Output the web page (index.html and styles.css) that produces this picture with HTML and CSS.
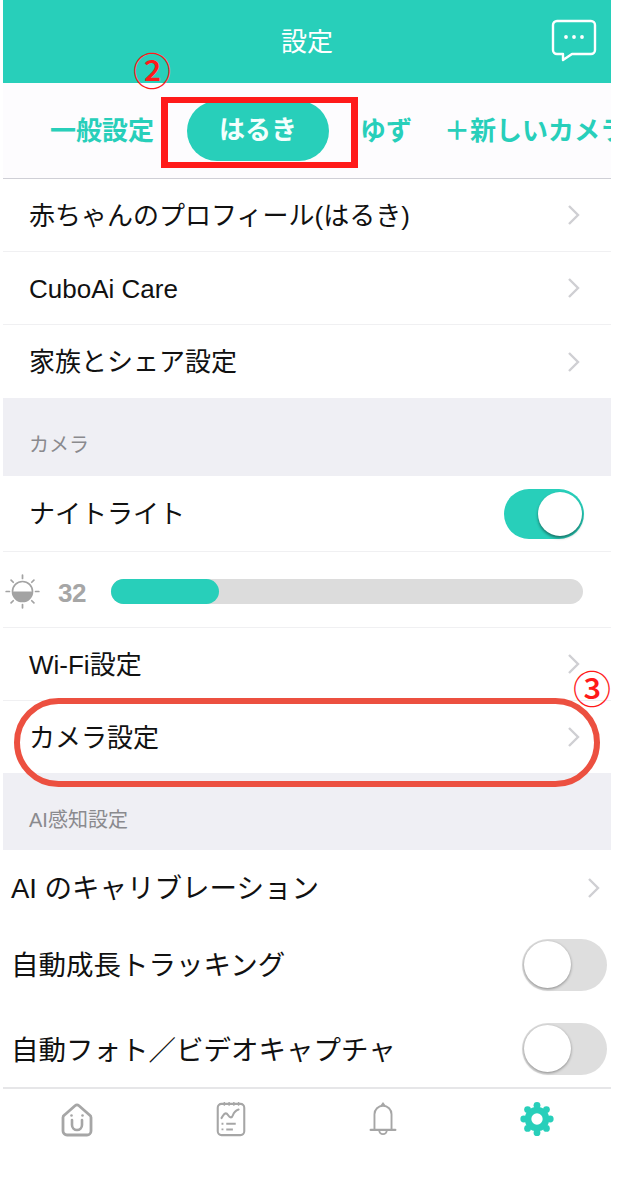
FILE: index.html
```html
<!DOCTYPE html>
<html lang="ja">
<head>
    <meta charset="UTF-8">
    <title>設定</title>
    <link rel="stylesheet" href="styles.css">
</head>
<body>
    <div class="phone">
        <div class="header">
            <span class="header-title">設定</span>
            <svg class="chat-icon" width="46" height="44" viewBox="0 0 46 44" fill="none">
                <path d="M6 2h34a4 4 0 0 1 4 4v25a4 4 0 0 1-4 4H21l-9 6v-6H6a4 4 0 0 1-4-4V6a4 4 0 0 1 4-4z" stroke="#fff" stroke-width="2.4" stroke-linejoin="round"/>
                <circle cx="15" cy="18" r="1.9" fill="#fff"/>
                <circle cx="23" cy="18" r="1.9" fill="#fff"/>
                <circle cx="31" cy="18" r="1.9" fill="#fff"/>
            </svg>
        </div>

        <div class="tabs">
            <span class="tab tab-first">一般設定</span>
            <span class="tab tab-active">はるき</span>
            <span class="tab tab-yuzu">ゆず</span>
            <span class="tab tab-new">＋新しいカメラ</span>
        </div>

        <div class="row row-first">
            <span class="row-label">赤ちゃんのプロフィール(はるき)</span>
            <svg class="chevron" width="14" height="22" viewBox="0 0 14 22" fill="none"><path d="M2 2l9 9-9 9" stroke="#cfcfd3" stroke-width="2.4"/></svg>
        </div>
        <div class="row row-care">
            <span class="row-label">CuboAi Care</span>
            <svg class="chevron" width="14" height="22" viewBox="0 0 14 22" fill="none"><path d="M2 2l9 9-9 9" stroke="#cfcfd3" stroke-width="2.4"/></svg>
        </div>
        <div class="row row-last">
            <span class="row-label">家族とシェア設定</span>
            <svg class="chevron" width="14" height="22" viewBox="0 0 14 22" fill="none"><path d="M2 2l9 9-9 9" stroke="#cfcfd3" stroke-width="2.4"/></svg>
        </div>

        <div class="section section-camera">カメラ</div>

        <div class="row row-light">
            <span class="row-label">ナイトライト</span>
            <span class="toggle toggle-on"><span class="knob"></span></span>
        </div>
        <div class="row row-slider">
            <svg class="sun" width="37" height="37" viewBox="0 0 34 34" fill="none">
                <circle cx="17" cy="17" r="9.2" stroke="#a3a3a3" stroke-width="1.5"/>
                <path d="M7.8 17h18.4a9.2 9.2 0 0 1-18.4 0z" fill="#a3a3a3"/>
                <path d="M17 2v3M17 29v3M2 17h3M29 17h3M6.5 6.5l2 2M25.500 25.500l2 2M27.500 6.500l-2 2M8.500 25.500l-2 2" stroke="#a3a3a3" stroke-width="1.6" stroke-linecap="round"/>
            </svg>
            <span class="slider-value">32</span>
            <div class="track"><div class="fill"></div></div>
        </div>
        <div class="row">
            <span class="row-label">Wi-Fi設定</span>
            <svg class="chevron" width="14" height="22" viewBox="0 0 14 22" fill="none"><path d="M2 2l9 9-9 9" stroke="#cfcfd3" stroke-width="2.4"/></svg>
        </div>
        <div class="row row-camera">
            <span class="row-label">カメラ設定</span>
            <svg class="chevron" width="14" height="22" viewBox="0 0 14 22" fill="none"><path d="M2 2l9 9-9 9" stroke="#cfcfd3" stroke-width="2.4"/></svg>
        </div>

        <div class="section section-ai">AI感知設定</div>

        <div class="row row-ai row-calibration">
            <span class="row-label">AI のキャリブレーション</span>
            <svg class="chevron" width="14" height="22" viewBox="0 0 14 22" fill="none"><path d="M2 2l9 9-9 9" stroke="#cfcfd3" stroke-width="2.4"/></svg>
        </div>
        <div class="row row-ai row-plain row-track">
            <span class="row-label">自動成長トラッキング</span>
            <span class="toggle toggle-off"><span class="knob"></span></span>
        </div>
        <div class="row row-ai row-plain row-photo">
            <span class="row-label">自動フォト／ビデオキャプチャ</span>
            <span class="toggle toggle-off"><span class="knob"></span></span>
        </div>

        <div class="tabbar">
            <svg class="tab-home" width="32" height="34" viewBox="0 0 32 34" fill="none">
                <path d="M14 2.800a3 3 0 0 1 4 0l10.500 9.200a3 3 0 0 1 1.500 2.500V28a4 4 0 0 1-4 4H6a4 4 0 0 1-4-4V14.500a3 3 0 0 1 1.500-2.500z" stroke="#a6a6a6" stroke-width="2.800" stroke-linejoin="round"/>
                <path d="M11 17v5a5 5 0 0 0 10 0v-5" stroke="#a6a6a6" stroke-width="2.600" stroke-linecap="round"/>
                <circle cx="10.500" cy="12.500" r="1.300" fill="#a6a6a6"/>
                <circle cx="21.500" cy="12.500" r="1.300" fill="#a6a6a6"/>
            </svg>
            <svg width="32" height="36" viewBox="0 0 32 38" fill="none">
                <rect x="2" y="3" width="28" height="33" rx="4" stroke="#a6a6a6" stroke-width="2.200"/>
                <path d="M9 1v4M14 1v4M19 1v4M24 1v4" stroke="#a6a6a6" stroke-width="1.500"/>
                <path d="M6 18c3-6 5-6 7-3s4 3 5 0 3-5 6-6" stroke="#a6a6a6" stroke-width="2.200" stroke-linecap="round"/>
                <path d="M11 24h10M11 30h7" stroke="#a6a6a6" stroke-width="2.200"/>
                <path d="M6 24h2M6 30h2" stroke="#a6a6a6" stroke-width="2"/>
            </svg>
            <svg width="28" height="36" viewBox="0 0 28 38" fill="none">
                <path d="M5 30V14a9 9 0 0 1 18 0v16" stroke="#a6a6a6" stroke-width="2"/>
                <path d="M1 30.500h26" stroke="#a6a6a6" stroke-width="2.400" stroke-linecap="round"/>
                <path d="M10 31a4 4 0 0 0 8 0" stroke="#a6a6a6" stroke-width="2"/>
                <path d="M14 1l3 4h-6z" fill="#a6a6a6"/>
            </svg>
            <svg class="tab-gear" width="34" height="36" viewBox="0 0 36 38" fill="none">
                <circle cx="18" cy="19" r="9.500" stroke="#28cfba" stroke-width="7"/>
                <g fill="#28cfba">
                    <circle cx="18" cy="4.500" r="3.600"/>
                    <circle cx="18" cy="33.500" r="3.600"/>
                    <circle cx="4" cy="19" r="3.600"/>
                    <circle cx="32" cy="19" r="3.600"/>
                    <circle cx="8" cy="9" r="3.600"/>
                    <circle cx="28" cy="9" r="3.600"/>
                    <circle cx="8" cy="29" r="3.600"/>
                    <circle cx="28" cy="29" r="3.600"/>
                </g>
            </svg>
        </div>

        <div class="mark mark-box"></div>
        <div class="mark mark-oval"></div>
        <span class="mark-number mark-two">②</span>
        <span class="mark-number mark-three">③</span>
    </div>
</body>
</html>
```

FILE: styles.css
```css
body {
    margin: 0;
    background-color: white;
    font-family: "Liberation Sans", "Noto Sans CJK JP", sans-serif;
    color: #111;
}
.phone {
    position: relative;
    width: 608px;
    height: 1194px;
    margin-left: 3px;
    overflow: hidden;
}
.header {
    position: relative;
    display: flex;
    justify-content: center;
    align-items: center;
    height: 83px;
    background-color: #28cfba;
}
.header-title {
    color: white;
    font-size: 26px;
    margin-top: -4px;
}
.chat-icon {
    position: absolute;
    top: 19px;
    left: 548px;
}
.tabs {
    display: flex;
    align-items: center;
    height: 95px;
    border-bottom: 1px solid #cfcfd6;
    background-color: #fdfcfe;
    white-space: nowrap;
    overflow: hidden;
    color: #28cfba;
    font-size: 26px;
    font-weight: bold;
}
.tab {
    flex: none;
    margin-bottom: 4px;
}
.tab-first {
    margin-left: 47px;
    width: 107px;
}
.tab-active {
    margin-left: 30px;
    margin-bottom: 0;
    width: 142px;
    height: 60px;
    line-height: 58px;
    margin-top: 1px;
    border-radius: 30px;
    text-align: center;
    color: #f4fffd;
    background-color: #28cfba;
}
.tab-yuzu {
    margin-left: 31px;
    width: 50px;
}
.tab-new {
    margin-left: 34px;
}
.row {
    display: flex;
    align-items: center;
    justify-content: space-between;
    height: 72px;
    padding: 0 30px 0 26px;
    border-bottom: 1px solid #f0f0f2;
    background-color: white;
    font-size: 26px;
}
.row-label {
    margin-bottom: 4px;
}
.row-care .row-label {
    margin-bottom: 0;
    margin-top: 2px;
}
.row-last,
.row-camera {
    border-bottom: none;
}
.row-last {
    height: 73px;
}
.section {
    display: flex;
    align-items: center;
    padding-left: 26px;
    background-color: #efeff4;
    color: #8a8a8e;
    font-size: 20px;
}
.section-camera {
    height: 78px;
    padding-top: 13px;
    box-sizing: border-box;
}
.section-ai {
    height: 77px;
    padding-top: 14px;
    box-sizing: border-box;
}
.row-light {
    height: 75px;
    padding-right: 27px;
}
.row-slider {
    height: 75px;
    justify-content: flex-start;
    padding: 0 28px 0 1px;
}
.row-slider > * {
    margin-top: 3px;
}
.row-ai {
    border-bottom: none;
    padding-left: 8px;
    padding-right: 10px;
    font-size: 27.5px;
}
.row-calibration {
    height: 75px;
}
.row-track {
    height: 78px;
}
.row-photo {
    height: 84px;
}
.row-plain {
    padding-right: 4px;
}
.row-track .row-label {
    margin-bottom: 2px;
}
.row-photo .row-label {
    margin-top: 6px;
    margin-bottom: 0;
}
.row-track .toggle {
    margin-top: 2px;
}
.row-photo .toggle {
    margin-top: 8px;
}
.sun {
    flex: none;
}
.slider-value {
    flex: none;
    width: 53px;
    margin-left: 17px;
    margin-top: 8px;
    color: #a6a6a6;
    font-size: 26px;
    font-weight: bold;
    letter-spacing: -0.5px;
}
.track {
    flex: 1;
    height: 25px;
    border-radius: 13px;
    background-color: #dcdcdc;
}
.fill {
    width: 108px;
    height: 25px;
    border-radius: 13px;
    background-color: #28cfba;
}
.toggle {
    position: relative;
    flex: none;
    display: block;
    width: 80px;
    height: 50px;
    border-radius: 25px;
}
.toggle-on {
    background-color: #28cfba;
}
.toggle-off {
    width: 85px;
    height: 52px;
    border-radius: 26px;
    background-color: #dedede;
}
.knob {
    position: absolute;
    top: 3px;
    width: 44px;
    height: 44px;
    border-radius: 50%;
    background-color: white;
    box-shadow: 0 2px 3px rgba(0, 0, 0, 0.45);
}
.toggle-on .knob {
    right: 2px;
}
.toggle-off .knob {
    left: 2px;
    top: 2px;
    width: 47px;
    height: 47px;
    box-shadow: 0 1px 3px rgba(0, 0, 0, 0.4);
}
.tabbar {
    display: grid;
    grid-template-columns: repeat(4, 1fr);
    justify-items: center;
    padding-top: 12px;
    border-top: 2px solid #e6e6e8;
    background-color: white;
}
.tabbar svg {
    display: block;
}
.tab-home {
    margin: 2px 4px 0 0;
}
.tab-gear {
    margin-left: 4px;
}
/* red notes drawn over the screenshot */
.mark {
    position: absolute;
    box-sizing: border-box;
}
.mark-box {
    top: 97px;
    left: 158px;
    width: 197px;
    height: 71px;
    border: 6px solid #ff1a1a;
    border-left-width: 7px;
    border-right-width: 7px;
}
.mark-oval {
    top: 698px;
    left: 11px;
    width: 586px;
    height: 89px;
    border: 6px solid #ec5040;
    border-radius: 45px;
}
.mark-number {
    position: absolute;
    color: #ff1a1a;
    font-family: "Noto Sans CJK JP", sans-serif;
    font-size: 38px;
    font-weight: 500;
    line-height: 44px;
}
.mark-two {
    top: 47px;
    left: 130px;
}
.mark-three {
    top: 665px;
    left: 570px;
}
```
